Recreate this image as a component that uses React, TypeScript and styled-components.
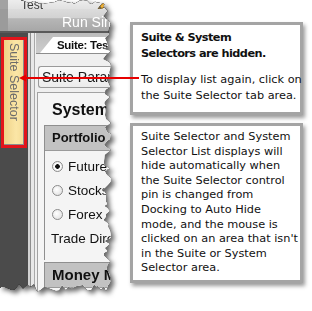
import React from 'react';
import styled, { createGlobalStyle } from 'styled-components';

const GlobalStyle = createGlobalStyle`
	html,
	body {
		margin: 0;
		padding: 0;
		background: #fff;
	}
`;

const uiFont = `'Liberation Sans', Arial, sans-serif`;
const noteFont = `'DejaVu Sans', Verdana, sans-serif`;

// ragged outline of the cut-out screenshot (fixed pseudo-random wobble)
const tornEdge = (() => {
	let seed = 7;
	const rnd = () => {
		seed = (seed * 1103 + 12345) % 65536;
		return seed / 65536;
	};
	const pts: string[] = ['0px 0px', '22px 0px'];
	for (let x = 24; x <= 104; x += 2 + Math.round(rnd() * 3)) {
		pts.push(`${x}px ${(rnd() * 4).toFixed(1)}px`);
	}
	for (let y = 4; y <= 284; y += 2 + Math.round(rnd() * 3)) {
		pts.push(`${(103 + rnd() * 8).toFixed(1)}px ${y}px`);
	}
	for (let x = 108; x >= 0; x -= 2 + Math.round(rnd() * 3)) {
		pts.push(`${x}px ${(284 + rnd() * 8).toFixed(1)}px`);
	}
	pts.push('0px 288px');
	return `polygon(${pts.join(', ')})`;
})();

const Page = styled.div`
	position: relative;
	display: flex;
	align-items: flex-start;
	width: 312px;
	height: 311px;
	overflow: hidden;
	background: #fff;
`;

const Shot = styled.div`
	flex: none;
	width: 113px;
	height: 293px;
	filter: drop-shadow(0 0 0.6px rgba(0, 0, 0, 0.95))
		drop-shadow(3px 3px 2.5px rgba(0, 0, 0, 0.6));
`;

const ShotClip = styled.div`
	display: flex;
	flex-direction: column;
	width: 100%;
	height: 100%;
	overflow: hidden;
	background: #4b4b4b;
	font-family: ${uiFont};
	clip-path: ${tornEdge};
`;

const TitleStrip = styled.div`
	display: flex;
	align-items: flex-end;
	justify-content: space-between;
	flex: none;
	height: 9px;
	padding: 0 6px 0 13px;
	background: linear-gradient(#ededed, #e1e1e1);
	border-left: 8px solid #a2a2a2;
	overflow: hidden;
`;

const TitleText = styled.span`
	margin-bottom: -2px;
	font-size: 12px;
	line-height: 12px;
	color: #3a3a3a;
`;

const PinIcon = styled.svg`
	align-self: flex-start;
	margin-top: 2px;
`;

const Ribbon = styled.div`
	display: flex;
	align-items: flex-end;
	flex: none;
	height: 22px;
	padding-left: 54px;
	background: linear-gradient(
		to bottom,
		#dcdcdc 0,
		#d2d2d2 40%,
		#b6b6b6 44%,
		#a7a7a7 100%
	);
	border-left: 8px solid #9b9b9b;
`;

const RunLabel = styled.span`
	margin-bottom: 1px;
	font-size: 14px;
	line-height: 16px;
	color: #fff;
	white-space: nowrap;
`;

const RibbonEdge = styled.div`
	flex: none;
	height: 2px;
	background: #5a5a5a;
`;

const Body = styled.div`
	display: flex;
	flex: 1;
	min-height: 0;
`;

const Rail = styled.div`
	flex: none;
	box-sizing: border-box;
	width: 28px;
	padding: 4px 0 0 1px;
	background: #4b4b4b;
`;

const SelectorTab = styled.div`
	box-sizing: border-box;
	width: 26px;
	height: 111px;
	padding-top: 3px;
	border: 3px solid #e3141b;
	background: linear-gradient(to right, #eed288, #fbe6a6 60%, #f5dc96);
	box-shadow: inset -1px -1px 0 #8c8c8c;
	writing-mode: vertical-rl;
	font-size: 12.5px;
	line-height: 20px;
	color: #6b6b6b;
	white-space: nowrap;
`;

const Frame = styled.div`
	flex: none;
	width: 8px;
	background: linear-gradient(
		to right,
		#d2d2d2 0 2px,
		#8e8e8e 2px 3px,
		#e8e8e8 3px 6px,
		#a9a9a9 6px 7px,
		#f0f0f0 7px
	);
`;

const Content = styled.div`
	display: flex;
	flex-direction: column;
	flex: 1;
	min-width: 0;
	background: #efefef;
`;

const DocTabs = styled.div`
	display: flex;
	align-items: flex-end;
	flex: none;
	height: 20px;
	padding-left: 4px;
	background: linear-gradient(#bcbcbc, #cdcdcd);
	border-bottom: 1px solid #8d8d8d;
`;

const DocTab = styled.div`
	height: 16px;
	padding-left: 17px;
	background: #fff;
	clip-path: polygon(13px 0, 100% 0, 100% 100%, 0 100%);
	font-size: 11.5px;
	font-weight: bold;
	letter-spacing: -0.3px;
	line-height: 16px;
	color: #111;
	white-space: nowrap;
`;

const DocBody = styled.div`
	display: flex;
	flex-direction: column;
	flex: 1;
	padding: 12px 0 0 1px;
`;

const ParamBar = styled.div`
	box-sizing: border-box;
	height: 22px;
	margin-left: 1px;
	padding-left: 3px;
	border: 1px solid #9a9a9a;
	border-right: none;
	border-radius: 3px 0 0 3px;
	background: linear-gradient(#fbfbfb, #ebebeb);
	font-size: 14px;
	line-height: 20px;
	color: #1b1b1b;
	white-space: nowrap;
`;

const SystemPanel = styled.div`
	flex: 1;
	margin-top: 4px;
	padding-left: 6px;
	border-top: 1px solid #a2a2a2;
	border-left: 1px solid #a2a2a2;
	background: #f5f5f5;
`;

const SystemTitle = styled.div`
	padding: 7px 0 0 8px;
	font-size: 16px;
	font-weight: bold;
	line-height: 20px;
	color: #111;
	white-space: nowrap;
`;

const Group = styled.div<{ $gap: number }>`
	margin-top: ${(p) => p.$gap}px;
	border-top: 1px solid #8f8f8f;
	border-left: 1px solid #8f8f8f;
`;

const GroupHead = styled.div<{ $size: number }>`
	height: 24px;
	padding-left: 7px;
	background: #c2c2c2;
	border-bottom: 1px solid #9a9a9a;
	font-size: ${(p) => p.$size}px;
	font-weight: bold;
	line-height: 24px;
	color: #111;
	white-space: nowrap;
`;

const GroupBody = styled.div`
	padding: 3px 0 10px 7px;
	background: #f4f4f4;
`;

const OptionRow = styled.div`
	display: flex;
	align-items: center;
	gap: 5px;
	height: 24px;
	font-size: 13.5px;
	color: #111;
	white-space: nowrap;
`;

const RadioDot = styled.span<{ $checked?: boolean }>`
	flex: none;
	box-sizing: border-box;
	width: 11px;
	height: 11px;
	border: 1px solid #8b8b8b;
	border-radius: 50%;
	background: ${(p) =>
		p.$checked
			? 'radial-gradient(circle, #111 0 2px, #fff 2.6px, #dedede 100%)'
			: 'radial-gradient(circle at 40% 40%, #fff, #dcdcdc)'};
`;

const TradeRow = styled.div`
	display: flex;
	align-items: center;
	height: 24px;
	margin-left: -1px;
	font-size: 13.5px;
	color: #111;
	white-space: nowrap;
`;

const Notes = styled.div`
	display: flex;
	flex-direction: column;
	gap: 8px;
	width: 173px;
	margin-left: 17px;
	padding-top: 22px;
`;

const NoteBox = styled.div<{ $pad: string; $lead: number }>`
	padding: ${(p) => p.$pad};
	border: 3px solid #a4a4a4;
	background: #fff;
	box-shadow: 2px 3px 4px rgba(0, 0, 0, 0.4);
	font-family: ${noteFont};
	font-size: 11.3px;
	line-height: ${(p) => p.$lead}px;
	color: #111;
`;

const NoteHead = styled.p`
	margin: 0 0 10px;
	font-weight: bold;
	letter-spacing: -0.55px;
	white-space: nowrap;
`;

const NoteText = styled.p`
	margin: 0;
	white-space: nowrap;
`;

const Arrow = styled.svg`
	position: absolute;
	top: 73px;
	left: 19px;
`;

const App: React.FC = () => {
	return (
		<>
			<GlobalStyle />
			<Page>
				<Shot>
					<ShotClip>
						<TitleStrip>
							<TitleText>Test</TitleText>
							<PinIcon width="10" height="8" viewBox="0 0 10 8">
								<path d="M1 7 L3 4 L7 0.5 L9.5 2.5 L6 6 Z" fill="#f2b233" stroke="#6a4b10" strokeWidth="0.8" />
								<path d="M1 7 L3 4 L4.5 5.5 Z" fill="#5a5a5a" />
							</PinIcon>
						</TitleStrip>
						<Ribbon>
							<RunLabel>Run Simulation</RunLabel>
						</Ribbon>
						<RibbonEdge />
						<Body>
							<Rail>
								<SelectorTab>Suite Selector</SelectorTab>
							</Rail>
							<Frame />
							<Content>
								<DocTabs>
									<DocTab>Suite: Test</DocTab>
								</DocTabs>
								<DocBody>
									<ParamBar>Suite Parameters</ParamBar>
									<SystemPanel>
										<SystemTitle>System Settings</SystemTitle>
										<Group $gap={5}>
											<GroupHead $size={13}>Portfolio</GroupHead>
											<GroupBody>
												<OptionRow>
													<RadioDot $checked />
													Futures
												</OptionRow>
												<OptionRow>
													<RadioDot />
													Stocks
												</OptionRow>
												<OptionRow>
													<RadioDot />
													Forex
												</OptionRow>
												<TradeRow>Trade Direction</TradeRow>
											</GroupBody>
										</Group>
										<Group $gap={2}>
											<GroupHead $size={15}>Money Management</GroupHead>
										</Group>
									</SystemPanel>
								</DocBody>
							</Content>
						</Body>
					</ShotClip>
				</Shot>
				<Notes>
					<NoteBox $pad="5px 6px 8px 8px" $lead={16}>
						<NoteHead>
							Suite &amp; System
							<br />
							Selectors are hidden.
						</NoteHead>
						<NoteText>
							To display list again, click on
							<br />
							the Suite Selector tab area.
						</NoteText>
					</NoteBox>
					<NoteBox $pad="4px 6px 4px 8px" $lead={14.6}>
						<NoteText>
							Suite Selector and System
							<br />
							Selector List displays will
							<br />
							hide automatically when
							<br />
							the Suite Selector control
							<br />
							pin is changed from
							<br />
							Docking to Auto Hide
							<br />
							mode, and the mouse is
							<br />
							clicked on an area that isn&apos;t
							<br />
							in the Suite or System
							<br />
							Selector area.
						</NoteText>
					</NoteBox>
				</Notes>
				<Arrow width="120" height="10" viewBox="0 0 120 10">
					<line x1="5" y1="5" x2="120" y2="5" stroke="#e60000" strokeWidth="2" />
					<polygon points="0,5 7,1.5 7,8.5" fill="#e60000" />
				</Arrow>
			</Page>
		</>
	);
};

export default App;
